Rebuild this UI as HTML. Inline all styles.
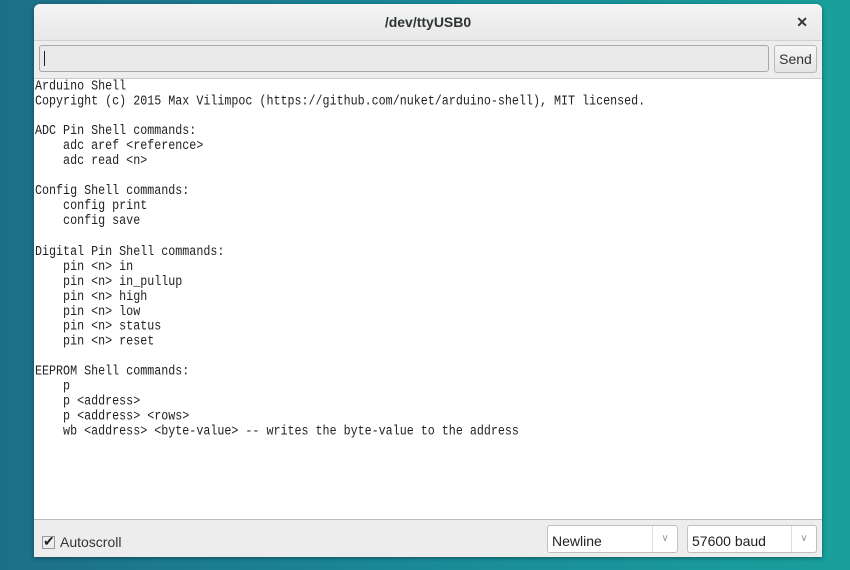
<!DOCTYPE html>
<html><head><style>
*{margin:0;padding:0;box-sizing:border-box}
body{width:850px;height:570px;overflow:hidden;background:linear-gradient(90deg,#1d6f88 0%,#1a8a98 50%,#19a09c 100%);font-family:"Liberation Sans",sans-serif;position:relative}
.win{position:absolute;left:34px;top:4px;width:788px;height:553px;background:#ededed;border-radius:6px 6px 0 0;box-shadow:0 1px 4px rgba(0,0,0,.4)}
.title{height:37px;line-height:37px;text-align:center;font-weight:bold;font-size:14px;color:#2e3436;border-bottom:1px solid #d0d0d0;background:linear-gradient(#f4f4f4,#e8e8e8);border-radius:6px 6px 0 0}
.x{position:absolute;right:14px;top:0;font-size:14px;font-weight:bold;color:#333}
.input{position:absolute;left:5px;top:41px;width:730px;height:27px;border:1px solid #a8a8a8;border-radius:3px;background:#e9e9e9}
.input:before{content:"";position:absolute;left:4px;top:5px;width:1px;height:15px;background:#222}
.send{position:absolute;left:740px;top:41px;width:43px;height:28px;border:1px solid #b8b8b8;border-radius:3px;background:linear-gradient(#f6f6f6,#e4e4e4);font-size:14px;color:#333;text-align:center;line-height:27px}
.out{position:absolute;left:0;top:74px;width:788px;height:442px;background:#fff;border-top:1px solid #ccc;border-bottom:1px solid #bbb}
pre{font-family:"Liberation Mono",monospace;font-size:11.7px;color:#222;position:absolute;left:1px;top:0;transform:scaleY(1.15);transform-origin:0 0;line-height:13.04px}
.auto{position:absolute;left:8px;top:530px;font-size:14px;color:#333}
.cb{display:inline-block;width:13px;height:13px;border:1px solid #999;background:#eee;vertical-align:-2px;margin-right:5px;position:relative}
.cb:after{content:"✔";position:absolute;left:0;top:-4px;font-size:14px;color:#222}
.sel{position:absolute;top:521px;height:28px;border:1px solid #c0c0c0;border-radius:3px;background:#fff;font-size:14px;color:#222;line-height:30px;padding-left:4px}
.sel span{position:absolute;right:0;top:0;width:25px;height:26px;border-left:1px solid #ddd;text-align:center;color:#999;font-size:10px;line-height:26px}
</style></head><body>
<div class="win">
<div class="title">/dev/ttyUSB0<span class="x">✕</span></div>
<div class="input"></div>
<div class="send">Send</div>
<div class="out"><pre>Arduino Shell
Copyright (c) 2015 Max Vilimpoc (https://github.com/nuket/arduino-shell), MIT licensed.

ADC Pin Shell commands:
    adc aref &lt;reference&gt;
    adc read &lt;n&gt;

Config Shell commands:
    config print
    config save

Digital Pin Shell commands:
    pin &lt;n&gt; in
    pin &lt;n&gt; in_pullup
    pin &lt;n&gt; high
    pin &lt;n&gt; low
    pin &lt;n&gt; status
    pin &lt;n&gt; reset

EEPROM Shell commands:
    p
    p &lt;address&gt;
    p &lt;address&gt; &lt;rows&gt;
    wb &lt;address&gt; &lt;byte-value&gt; -- writes the byte-value to the address</pre></div>
<div class="auto"><span class="cb"></span>Autoscroll</div>
<div class="sel" style="left:513px;width:131px">Newline<span>∨</span></div>
<div class="sel" style="left:653px;width:130px">57600 baud<span>∨</span></div>
</div>
</body></html>
